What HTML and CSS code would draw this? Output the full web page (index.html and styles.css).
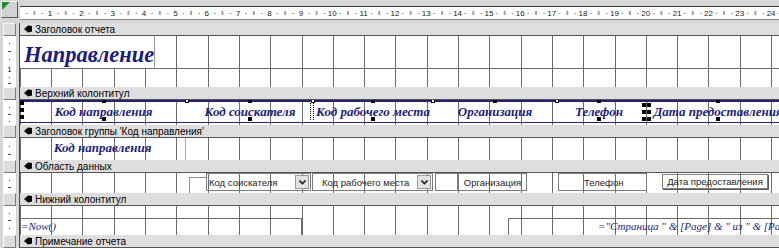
FILE: index.html
```html
<!DOCTYPE html>
<html lang="ru">
<head>
    <meta charset="UTF-8">
    <title>Отчет — конструктор</title>
    <link rel="stylesheet" href="styles.css">
</head>
<body>

<div class="designer">

    <!-- ruler row -->
    <div class="band band-top">
        <div class="corner"></div>
        <div class="hruler">
            <svg width="760" height="12">
                <defs>
                    <pattern id="ticks" x="-1.3" y="0" width="31.35" height="12" patternUnits="userSpaceOnUse">
                        <rect x="7.4" y="6" width="1" height="1" fill="#444"/>
                        <rect x="15.2" y="4" width="1" height="4" fill="#444"/>
                        <rect x="23.2" y="6" width="1" height="1" fill="#444"/>
                    </pattern>
                </defs>
                <rect x="0" y="0" width="760" height="12" fill="url(#ticks)"/>
                <g class="nums">
                    <text x="30">1</text><text x="61.4">2</text><text x="92.8">3</text><text x="124.1">4</text>
                    <text x="155.5">5</text><text x="186.8">6</text><text x="218.2">7</text><text x="249.5">8</text>
                    <text x="280.9">9</text><text x="312.2">10</text><text x="343.6">11</text><text x="374.9">12</text>
                    <text x="406.3">13</text><text x="437.6">14</text><text x="469">15</text><text x="500.3">16</text>
                    <text x="531.7">17</text><text x="563">18</text><text x="594.4">19</text><text x="625.7">20</text>
                    <text x="657.1">21</text><text x="688.4">22</text><text x="719.8">23</text><text x="751.1">24</text>
                </g>
            </svg>
        </div>
    </div>

    <!-- report header -->
    <div class="band">
        <div class="side"><div class="knob"></div></div>
        <div class="bar"><svg class="ico" viewBox="0 0 8 8"><path d="M0 4 L4 0.5 L8 1 L8 6.5 L4 7.5 Z"/></svg>Заголовок отчета</div>
    </div>
    <div class="band sect-rh">
        <div class="side">
            <div class="vruler">
                <svg width="13" height="51">
                    <rect x="6" y="7" width="1" height="1"/><rect x="5" y="15" width="3" height="1"/><rect x="6" y="23" width="1" height="1"/>
                    <text x="6.5" y="36">1</text>
                    <rect x="6" y="41" width="1" height="1"/><rect x="5" y="47" width="3" height="1"/>
                </svg>
            </div>
        </div>
        <div class="canvas rh">
            <div class="title">Направление</div>
        </div>
    </div>

    <!-- page header -->
    <div class="band">
        <div class="side"><div class="knob"></div></div>
        <div class="bar"><svg class="ico" viewBox="0 0 8 8"><path d="M0 4 L4 0.5 L8 1 L8 6.5 L4 7.5 Z"/></svg>Верхний колонтитул</div>
    </div>
    <div class="band sect-ph">
        <div class="side">
            <div class="vruler">
                <svg width="13" height="25">
                    <rect x="6" y="7" width="1" height="1"/><rect x="5" y="14" width="3" height="1"/><rect x="6" y="21" width="1" height="1"/>
                </svg>
            </div>
        </div>
        <div class="canvas ph">
            <div class="labels">
                <div class="lbl w1">Код направления
                    <span class="stack"><i></i><i></i><i></i></span>
                    <span class="h top"></span><span class="h bot"></span>
                </div>
                <div class="lbl w2">Код соискателя
                    <span class="h open"></span><span class="h top"></span><span class="h bot"></span>
                </div>
                <div class="lbl w3">Код рабочего места
                    <span class="dots"></span>
                    <span class="h open"></span><span class="h top"></span><span class="h bot"></span>
                </div>
                <div class="lbl w4">Организация
                    <span class="h open"></span><span class="h top"></span>
                </div>
                <div class="lbl w5">Телефон
                    <span class="h open"></span><span class="h top"></span><span class="h bot"></span>
                </div>
                <div class="lbl w6">Дата предоставления
                    <span class="cluster"><i></i><i></i><i></i><i></i><i></i><i></i></span>
                    <span class="h top"></span><span class="h bot"></span>
                </div>
            </div>
        </div>
    </div>

    <!-- group header -->
    <div class="band">
        <div class="side"><div class="knob"></div></div>
        <div class="bar"><svg class="ico" viewBox="0 0 8 8"><path d="M0 4 L4 0.5 L8 1 L8 6.5 L4 7.5 Z"/></svg>Заголовок группы 'Код направления'</div>
    </div>
    <div class="band sect-gh">
        <div class="side">
            <div class="vruler">
                <svg width="13" height="22">
                    <rect x="6" y="8" width="1" height="1"/><rect x="5" y="16" width="3" height="1"/>
                </svg>
            </div>
        </div>
        <div class="canvas gh">
            <div class="glbl">Код направления</div>
        </div>
    </div>

    <!-- detail -->
    <div class="band">
        <div class="side"><div class="knob"></div></div>
        <div class="bar"><svg class="ico" viewBox="0 0 8 8"><path d="M0 4 L4 0.5 L8 1 L8 6.5 L4 7.5 Z"/></svg>Область данных</div>
    </div>
    <div class="band sect-dt">
        <div class="side">
            <div class="vruler">
                <svg width="13" height="20">
                    <rect x="6" y="7" width="1" height="1"/><rect x="5" y="14" width="3" height="1"/>
                </svg>
            </div>
        </div>
        <div class="canvas dt">
            <div class="stub"></div>
            <div class="fld combo c1">Код соискателя
                <span class="drop"><svg width="7" height="5" viewBox="0 0 7 5"><path d="M0.5 0.5 L3.5 3.5 L6.5 0.5" fill="none" stroke="#222" stroke-width="1.6"/></svg></span>
            </div>
            <div class="fld combo c2">Код рабочего места
                <span class="drop"><svg width="7" height="5" viewBox="0 0 7 5"><path d="M0.5 0.5 L3.5 3.5 L6.5 0.5" fill="none" stroke="#222" stroke-width="1.6"/></svg></span>
            </div>
            <div class="fld blank"></div>
            <div class="fld org">Организация</div>
            <div class="fld tel">Телефон</div>
            <div class="fld date">Дата предоставления</div>
        </div>
    </div>

    <!-- page footer -->
    <div class="band">
        <div class="side"><div class="knob"></div></div>
        <div class="bar"><svg class="ico" viewBox="0 0 8 8"><path d="M0 4 L4 0.5 L8 1 L8 6.5 L4 7.5 Z"/></svg>Нижний колонтитул</div>
    </div>
    <div class="band sect-ft">
        <div class="side">
            <div class="vruler">
                <svg width="13" height="29">
                    <rect x="6" y="7" width="1" height="1"/><rect x="5" y="14" width="3" height="1"/><rect x="6" y="22" width="1" height="1"/>
                </svg>
            </div>
        </div>
        <div class="canvas ft">
            <div class="expr now">=Now()</div>
            <div class="expr pages">="Страница " &amp; [Page] &amp; " из " &amp; [Pages]</div>
        </div>
    </div>

    <!-- report footer -->
    <div class="band">
        <div class="side"><div class="knob"></div></div>
        <div class="bar"><svg class="ico" viewBox="0 0 8 8"><path d="M0 4 L4 0.5 L8 1 L8 6.5 L4 7.5 Z"/></svg>Примечание отчета</div>
    </div>

</div>

</body>
</html>
```

FILE: styles.css
```css
* {
    box-sizing: border-box;
}

body {
    margin: 0;
    width: 779px;
    height: 248px;
    overflow: hidden;
    background-color: #d6d6d6;
    font-family: "Liberation Sans", Arial, sans-serif;
    --grid: #6c6c6c;
    --navy: #1c1c80;
}

.band {
    display: grid;
    grid-template-columns: 20px 1fr;
}

/* rulers */
.band-top { height: 23px; }

.corner {
    margin: 1px 0 0 1px;
    width: 17px;
    height: 17px;
    background-color: #d2d2d2;
    border: 1px solid;
    border-color: #f2f2f2 #5a5a5a #5a5a5a #f2f2f2;
}

.corner::before {
    content: "";
    display: block;
    width: 0;
    height: 0;
    border-top: 8px solid #1f8f2f;
    border-right: 8px solid transparent;
}

.hruler {
    margin-top: 6px;
    height: 14px;
    background-color: #fff;
    border-top: 1px solid #3a3a3a;
    border-bottom: 1px solid #8a8a8a;
    overflow: hidden;
}

.hruler svg { display: block; }

.nums text {
    font-family: "Liberation Sans", Arial, sans-serif;
    font-size: 8px;
    fill: #222;
    text-anchor: middle;
    dominant-baseline: central;
    transform: translateY(6px);
}

.side {
    padding: 0 3px;
    border-right: 1px solid #4a4a4a;
}

.knob {
    height: 100%;
    background-color: #dcdcdc;
    border: 1px solid;
    border-color: #f6f6f6 #7c7c7c #7c7c7c #f6f6f6;
}

.vruler {
    height: 100%;
    background-color: #fff;
    overflow: hidden;
}

.vruler svg { display: block; fill: #444; }

.vruler text {
    font-size: 8px;
    font-family: "Liberation Sans", Arial, sans-serif;
    text-anchor: middle;
    fill: #222;
}

/* section bars */
.bar {
    height: 13px;
    background-color: #dedede;
    border-bottom: 1px solid #555;
    display: flex;
    align-items: center;
    gap: 3px;
    padding-left: 4px;
    font-size: 10px;
    color: #000;
    white-space: nowrap;
}

.ico {
    width: 8px;
    height: 8px;
    fill: #000;
}

/* design canvas with 1 cm grid */
.canvas {
    position: relative;
    overflow: hidden;
    background-color: #fff;
    background-image: linear-gradient(to right,
        var(--grid) 0 1px, transparent 1px 31px,
        var(--grid) 31px 32px, transparent 32px 62px,
        var(--grid) 62px 63px, transparent 63px 94px,
        var(--grid) 94px 95px, transparent 95px 125px,
        var(--grid) 125px 126px, transparent 126px 156px,
        var(--grid) 156px 157px, transparent 157px 188px,
        var(--grid) 188px 189px, transparent 189px 219px,
        var(--grid) 219px 220px, transparent 220px 250px,
        var(--grid) 250px 251px, transparent 251px 282px,
        var(--grid) 282px 283px, transparent 283px);
    background-size: 313px 100%;
}

.sect-rh { height: 51px; }
.sect-ph { height: 25px; }
.sect-gh { height: 22px; }
.sect-dt { height: 20px; }
.sect-ft { height: 29px; }

.rh {
    background-image:
        linear-gradient(to bottom, transparent 32px, var(--grid) 32px 33px, transparent 33px),
        linear-gradient(to right,
        var(--grid) 0 1px, transparent 1px 31px,
        var(--grid) 31px 32px, transparent 32px 62px,
        var(--grid) 62px 63px, transparent 63px 94px,
        var(--grid) 94px 95px, transparent 95px 125px,
        var(--grid) 125px 126px, transparent 126px 156px,
        var(--grid) 156px 157px, transparent 157px 188px,
        var(--grid) 188px 189px, transparent 189px 219px,
        var(--grid) 219px 220px, transparent 220px 250px,
        var(--grid) 250px 251px, transparent 251px 282px,
        var(--grid) 282px 283px, transparent 283px);
    background-size: 100% 100%, 313px 100%;
}

.title {
    width: 135px;
    height: 32px;
    padding: 7px 0 0 4px;
    background-color: #fff;
    border-right: 1px solid #9a9a9a;
    font-family: "Liberation Serif", "Times New Roman", serif;
    font-weight: bold;
    font-style: italic;
    font-size: 22.5px;
    line-height: 24px;
    color: var(--navy);
    white-space: nowrap;
}

/* page header labels */
.labels {
    display: flex;
    height: 23px;
    border-top: 2px solid #24246e;
    border-bottom: 1px solid #24246e;
}

.lbl {
    position: relative;
    flex-shrink: 0;
    text-align: center;
    font-family: "Liberation Serif", "Times New Roman", serif;
    font-weight: bold;
    font-style: italic;
    font-size: 13px;
    line-height: 20px;
    color: var(--navy);
    white-space: nowrap;
}

.w1 { width: 167px; }
.w2 { width: 126px; }
.w3 { width: 120px; }
.w4 { width: 124px; }
.w5 { width: 84px; margin-right: 4px; }
.w6 { width: 146px; }

.h {
    position: absolute;
    width: 4px;
    height: 4px;
    background-color: #000;
}

.h.top { top: -3px; left: 50%; margin-left: -2px; }
.h.bot { top: 15px; left: 50%; margin-left: -2px; }
.h.open { top: -3px; left: -2px; background-color: #fff; border: 1px solid #000; }

.stack {
    position: absolute;
    left: 0;
    top: -1px;
    display: flex;
    flex-direction: column;
    gap: 3px;
}

.stack i, .cluster i {
    display: block;
    width: 4px;
    height: 4px;
    background-color: #000;
}

.cluster {
    position: absolute;
    left: -3px;
    top: 1px;
    display: grid;
    grid-template-columns: 4px 4px;
    gap: 3px 1px;
}

.dots {
    position: absolute;
    left: -3px;
    top: 1px;
    width: 4px;
    height: 17px;
    border-left: 1px dotted #000;
    border-right: 1px dotted #000;
}

/* group header */
.glbl {
    width: 166px;
    height: 22px;
    border-right: 1px solid #a8a8a8;
    text-align: center;
    font-family: "Liberation Serif", "Times New Roman", serif;
    font-weight: bold;
    font-style: italic;
    font-size: 13px;
    line-height: 20px;
    color: var(--navy);
    white-space: nowrap;
}

/* detail controls */
.dt {
    display: flex;
    align-items: flex-start;
}

.stub {
    flex-shrink: 0;
    margin: 4px 0 0 169px;
    width: 17px;
    height: 18px;
    border-left: 1px solid #8a8a8a;
    border-top: 1px solid #8a8a8a;
}

.fld {
    flex-shrink: 0;
    display: flex;
    align-items: center;
    height: 18px;
    border: 1px solid #7c7c7c;
    font-size: 9.5px;
    color: #222;
    white-space: nowrap;
}

.c1 { width: 105px; padding-left: 2px; }
.c2 { width: 121px; margin-left: 1px; padding-left: 9px; }
.blank { width: 23px; margin-left: 2px; }
.org { width: 69px; justify-content: center; }
.tel { width: 89px; margin-left: 31px; padding-left: 25px; }

.date {
    width: 106px;
    height: 15px;
    margin: 1px 0 0 15px;
    justify-content: center;
    box-shadow: 1px 1px 0 #5a5a5a;
}

.drop {
    margin-left: auto;
    margin-right: 1px;
    width: 14px;
    height: 14px;
    display: flex;
    align-items: center;
    justify-content: center;
    background-color: #e2e2e2;
    border: 1px solid #9a9a9a;
}

.drop svg { display: block; }

/* footer expressions */
.ft {
    display: flex;
    align-items: flex-start;
}

.expr {
    flex-shrink: 0;
    height: 18px;
    margin-top: 12px;
    border-top: 1px solid #6c6c6c;
    font-family: "Liberation Serif", "Times New Roman", serif;
    font-style: italic;
    font-size: 11px;
    line-height: 15px;
    color: var(--navy);
    white-space: nowrap;
}

.now {
    width: 282px;
    padding-left: 1px;
    border-right: 1px solid #6c6c6c;
}

.pages {
    width: 290px;
    margin-left: 206px;
    padding-left: 89px;
    border-left: 1px solid #6c6c6c;
}
```
